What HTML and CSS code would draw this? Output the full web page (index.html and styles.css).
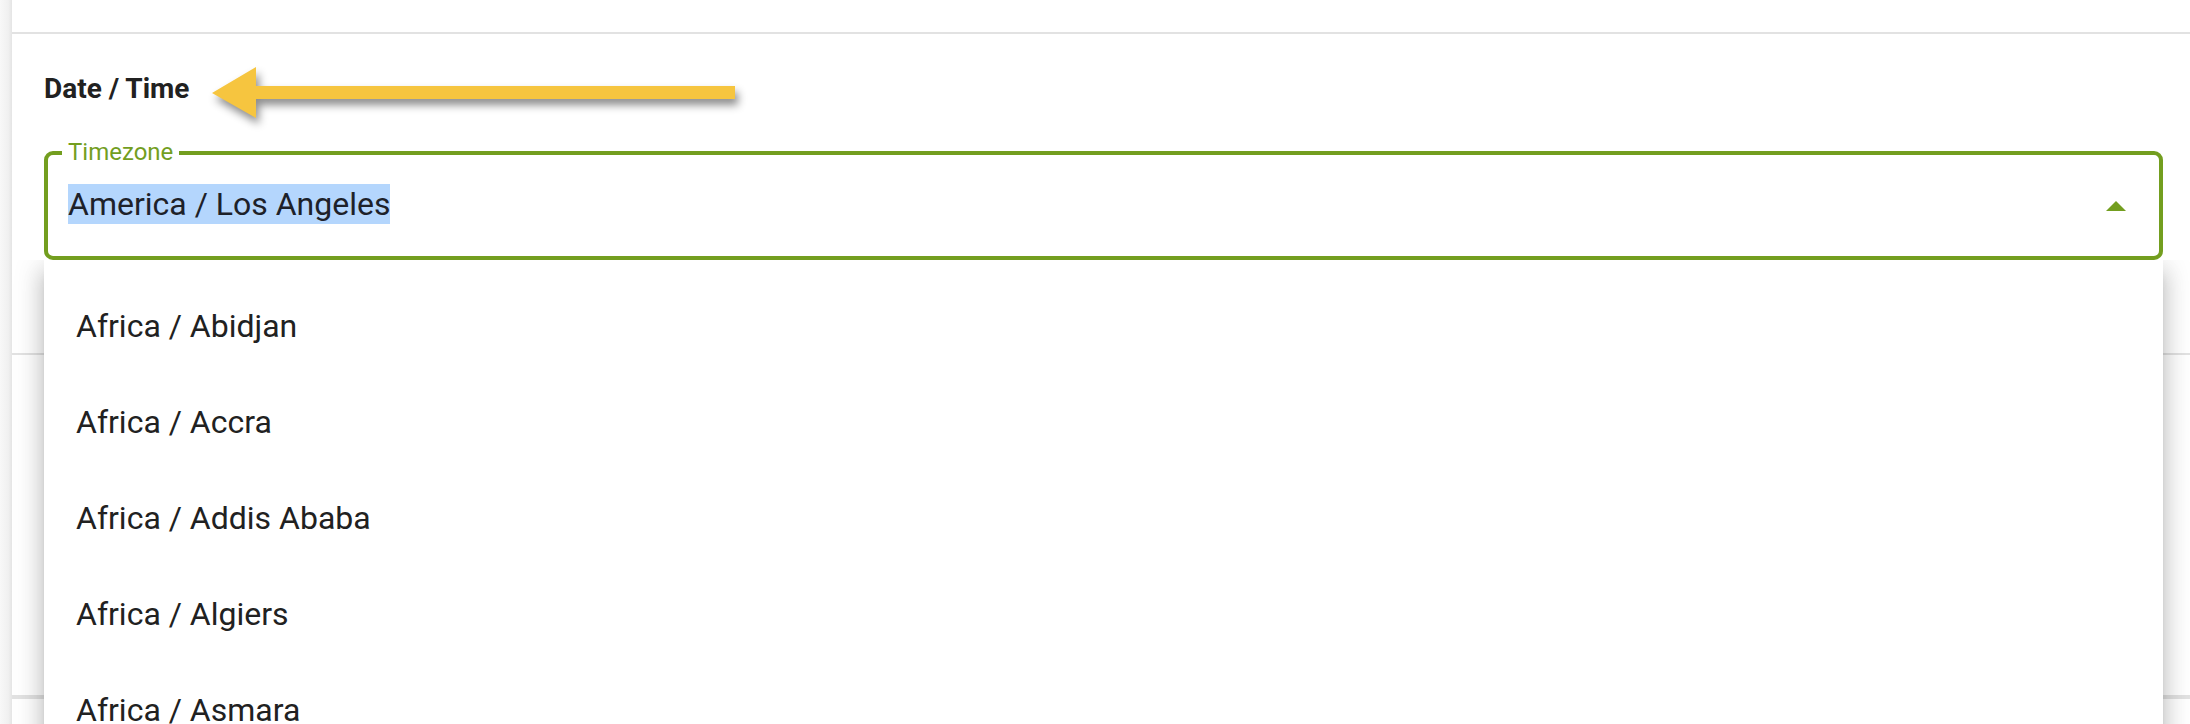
FILE: index.html
```html
<!DOCTYPE html>
<html>
  <head>
    <title>Date / Time</title>
    <link rel="stylesheet" href="styles.css">
  </head>
  <body>
    <div class="page">
      <div class="rail"></div>
      <main class="content">
        <div class="section section-top"></div>

        <section class="section datetime">
          <h2>Date / Time</h2>
          <div class="field-wrap">
            <fieldset class="field">
              <legend>Timezone</legend>
              <div class="field-row">
                <span class="field-value">America / Los Angeles</span>
                <span class="caret"></span>
              </div>
            </fieldset>
            <ul class="menu">
              <li>Africa / Abidjan</li>
              <li>Africa / Accra</li>
              <li>Africa / Addis Ababa</li>
              <li>Africa / Algiers</li>
              <li>Africa / Asmara</li>
            </ul>
          </div>
        </section>

        <section class="section section-next"></section>
        <section class="section section-last"></section>
      </main>

      <!-- annotation arrow pointing at the heading -->
      <svg class="callout" width="780" height="150" viewBox="0 0 780 150">
        <polygon points="212,93 256,67 256,86 735,86 735,99 256,99 256,118" fill="#f6c53f"/>
      </svg>
    </div>
  </body>
</html>
```

FILE: styles.css
```css
html, body {
  margin: 0;
  height: 724px;
  overflow: hidden;
  background: #fff;
  font-family: Roboto, "Noto Sans", sans-serif;
}
.page {
  position: relative;
  display: flex;
  height: 724px;
}
.rail {
  width: 12px;
  flex: none;
  background: linear-gradient(to right, #f8f8f8, #f0f0f0 70%, #e4e4e4);
}
.content {
  flex: 1;
}
.section {
  border-bottom: 2px solid #e2e2e2;
}
.section-top {
  height: 32px;
}
.datetime {
  padding: 39px 27px 93px 32px;
}
.section-next {
  height: 340px;
}
.datetime h2 {
  margin: 0 0 34px 0;
  font-size: 28px;
  line-height: 32px;
  font-weight: 700;
  color: #212121;
}
.field-wrap {
  position: relative;
}
.field {
  margin: 0;
  padding: 0;
  border: 4px solid #739e1f;
  border-radius: 9px;
}
.field legend {
  margin-left: 14px;
  padding: 0 6px;
  font-size: 24px;
  line-height: 27px;
  color: #739e1f;
}
.field-row {
  display: flex;
  align-items: center;
  justify-content: space-between;
  padding: 18px 33px 32px 20px;
}
.field-value {
  display: inline-block;
  font-size: 32px;
  line-height: 40px;
  color: #1d2129;
  background: #b4d6fd;
}
.caret {
  width: 0;
  height: 0;
  margin-top: 4px;
  border-left: 10px solid transparent;
  border-right: 10px solid transparent;
  border-bottom: 10px solid #739e1f;
}
.menu {
  position: absolute;
  top: 100%;
  left: 0;
  right: 0;
  margin: 0;
  padding: 18px 0;
  list-style: none;
  background: #fff;
  box-shadow: 0 10px 10px -6px rgba(0, 0, 0, 0.2),
              0 16px 20px 2px rgba(0, 0, 0, 0.14),
              0 6px 28px 4px rgba(0, 0, 0, 0.12);
  clip-path: inset(0 -40px -40px -40px);
  z-index: 2;
}
.menu li {
  padding: 0 32px;
  font-size: 32px;
  line-height: 96px;
  color: #212121;
}
.callout {
  position: absolute;
  left: 0;
  top: 0;
  filter: drop-shadow(3px 6px 4px rgba(0, 0, 0, 0.45));
  z-index: 3;
}
```
